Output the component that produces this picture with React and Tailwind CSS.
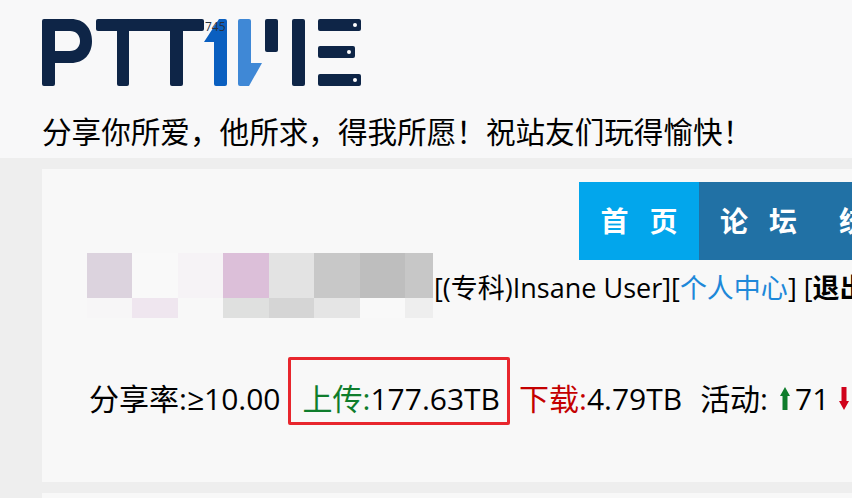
const FONT = { fontFamily: '"Open Sans", "Noto Sans CJK SC", sans-serif' };

const mosaicTop = ['bg-[#dcd3de]', 'bg-[#f9f9f9]', 'bg-[#f6f3f6]', 'bg-[#dcbfd9]', 'bg-[#e3e3e3]', 'bg-[#c8c8c8]', 'bg-[#bebebe]', 'bg-[#c7c7c7]'];
const mosaicBottom = ['bg-[#f7f6f7]', 'bg-[#efe6ef]', 'bg-[#f8f8f8]', 'bg-[#dfe0df]', 'bg-[#d5d5d5]', 'bg-[#e5e5e5]', 'bg-[#f9f9f9]', 'bg-[#eeeeee]'];

const Logo = () => (
  <svg width="319" height="67" viewBox="42 19 319 67" className="block">
    <g fill="#0e2547">
      <path fillRule="evenodd" d="M44 19h27c13 0 21 9 21 22s-8 22-21 22H55v21a2 2 0 0 1-2 2h-9a2 2 0 0 1-2-2V21a2 2 0 0 1 2-2zM55 31v20h15c6 0 10-4 10-10s-4-10-10-10z" />
      <rect x="96" y="19" width="108" height="12" rx="2" />
      <rect x="117" y="19" width="12" height="67" rx="2" />
      <rect x="170" y="19" width="13" height="67" rx="2" />
      <rect x="265" y="19" width="13" height="33" rx="2" />
      <rect x="292" y="19" width="13" height="67" rx="2" />
      <rect x="318" y="19" width="43" height="12" rx="2" />
      <rect x="318" y="46" width="37" height="12" rx="2" />
      <rect x="318" y="74" width="43" height="12" rx="2" />
    </g>
    <path d="M204 42 219 19h6a2 2 0 0 1 2 2v63a2 2 0 0 1-2 2h-9a2 2 0 0 1-2-2V42z" fill="#0a5fc0" />
    <path d="M240 19h9a2 2 0 0 1 2 2v42h11l-13 23h-9a2 2 0 0 1-2-2V21a2 2 0 0 1 2-2z" fill="#3f88d6" />
    <g fill="#ffffff">
      <circle cx="355" cy="25" r="2" />
      <circle cx="349" cy="52" r="2" />
      <circle cx="355" cy="80" r="2" />
    </g>
  </svg>
);

const NavItem = ({ first, second, active }) => (
  <div className={`flex h-[78px] shrink-0 items-center justify-center gap-[21px] text-[28px] font-bold text-white ${active ? 'w-[120px] bg-[#02a6ec]' : 'w-[119px] bg-[#2171a5]'}`}>
    <span>{first}</span>
    <span>{second}</span>
  </div>
);

const App = () => {
  return (
    <div className="h-[498px] w-[852px] overflow-hidden bg-[#eeeeee]" style={FONT}>
      {/* Header */}
      <div className="h-[158px] bg-[#f8f8f9] pl-[42px] pt-[19px]">
        <div className="relative w-[319px]">
          <Logo />
          <span className="absolute left-[163px] top-[1px] text-[12px] leading-[13px] text-[#26303f]">745</span>
        </div>
        <p className="mt-[18px] whitespace-nowrap text-[29.6px] leading-[56px] text-black">
          分享你所爱，他所求，得我所愿！祝站友们玩得愉快！
        </p>
      </div>

      {/* Main card */}
      <div className="ml-[42px] mt-[11px] h-[313px] w-[810px] overflow-hidden bg-[#f8f8f8] pt-[13px]">
        <div className="ml-[537px] flex">
          <NavItem first="首" second="页" active />
          <NavItem first="论" second="坛" />
          <NavItem first="统" second="计" />
        </div>

        <div className="ml-[45px] mt-[-7px] flex items-end whitespace-nowrap">
          <div className="w-[346px] shrink-0">
            <div className="grid grid-cols-[45px_46px_45px_46px_45px_46px_45px_28px]">
              {mosaicTop.map((color, i) => (
                <div key={i} className={`h-[45px] ${color}`} />
              ))}
              {mosaicBottom.map((color, i) => (
                <div key={i} className={`h-[20px] ${color}`} />
              ))}
            </div>
          </div>
          <div className="ml-[1px] mb-[8px] text-[27px] leading-[44px] text-black">
            [(专科)Insane User][<span className="text-[#1e88d9]">个人中心</span>] [<span className="font-bold">退出</span>]
          </div>
        </div>

        <div className="relative ml-[47px] mt-[56px] flex items-center whitespace-nowrap text-[30px] leading-[50px] text-black">
          <span>分享率:≥10.00</span>
          <span className="ml-[22px] text-[#0f7d2c]">上传:</span>
          <span>177.63TB</span>
          <span className="ml-[19px] text-[#c40000]">下载:</span>
          <span>4.79TB</span>
          <span className="ml-[18px]">活动:</span>
          <svg width="10" height="24" viewBox="0 0 10 24" className="ml-[12px]">
            <path d="M5 0 10 9H7.5V23h-5V9H0z" fill="#0f7d2c" />
          </svg>
          <span className="ml-[5px]">71</span>
          <svg width="10" height="24" viewBox="0 0 10 24" className="ml-[10px]">
            <path d="M5 23 10 14H7.5V0h-5v14H0z" fill="#d0021b" />
          </svg>
          {/* annotation box */}
          <div className="absolute left-[199px] top-[-17px] h-[68px] w-[222px] rounded-[2px] border-[3px] border-[#e8262d]" />
        </div>
      </div>

      {/* Next card */}
      <div className="ml-[42px] mt-[11px] h-[40px] bg-[#f8f8f8]" />
    </div>
  );
};

export default App;
